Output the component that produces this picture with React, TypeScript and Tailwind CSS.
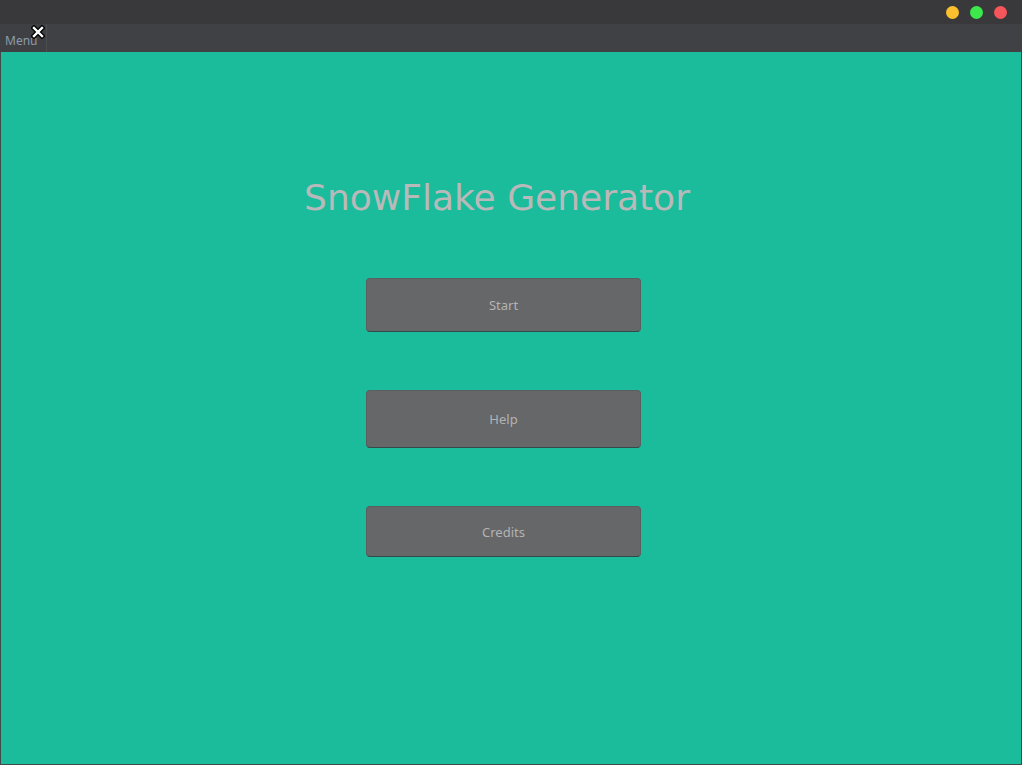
import React from "react";

const BUTTONS = [
  { label: "Start", h: "h-[54px]", mt: "mt-[58px]" },
  { label: "Help", h: "h-[58px]", mt: "mt-[58px]" },
  { label: "Credits", h: "h-[51px]", mt: "mt-[58px]" },
];

function CloseMark() {
  return (
    <svg width="14" height="14" viewBox="0 0 14 14" className="absolute left-[31px] top-[1px]">
      <path d="M3 3 L11 11 M11 3 L3 11" stroke="#000" strokeWidth="5" strokeLinecap="square" />
      <path d="M3 3 L11 11 M11 3 L3 11" stroke="#fff" strokeWidth="2.4" strokeLinecap="square" />
    </svg>
  );
}

export default function App() {
  return (
    <div className="flex h-[765px] w-[1022px] flex-col overflow-hidden bg-[#3a3b3d] font-['DejaVu_Sans',sans-serif]">
      {/* Title bar */}
      <div className="flex h-[24px] items-center justify-end gap-[11px] bg-[#39393b] pr-[15px]">
        <span className="h-[13px] w-[13px] rounded-full bg-[#fcc02e]" />
        <span className="h-[13px] w-[13px] rounded-full bg-[#3ce84c]" />
        <span className="h-[13px] w-[13px] rounded-full bg-[#f6555b]" />
      </div>

      {/* Tab bar */}
      <div className="relative flex h-[28px] bg-[#404144]">
        <div className="flex w-[47px] items-end border-r border-[#4c4d50] bg-[#3f4043] pb-[5px] pl-[5px] font-['Noto_Sans',sans-serif] text-[12px] leading-none text-[#8c9cab]">
          Menu
        </div>
        <CloseMark />
      </div>

      {/* Main view */}
      <div className="flex flex-1 flex-col items-center border-x border-b border-[#3f4a4a] bg-[#1abc9c]">
        <h1 className="mt-[124px] pr-[28px] text-[36px] leading-[44px] font-normal text-[#b9b9b9]">
          SnowFlake Generator
        </h1>
        {BUTTONS.map((b) => (
          <button
            key={b.label}
            className={`${b.h} ${b.mt} mr-[15px] w-[275px] rounded-[4px] border border-[#5c5d60] border-b-[#34494a] bg-[#666769] pt-[2px] font-['Noto_Sans',sans-serif] text-[13px] text-[#b3b3b3]`}
          >
            {b.label}
          </button>
        ))}
      </div>
    </div>
  );
}
